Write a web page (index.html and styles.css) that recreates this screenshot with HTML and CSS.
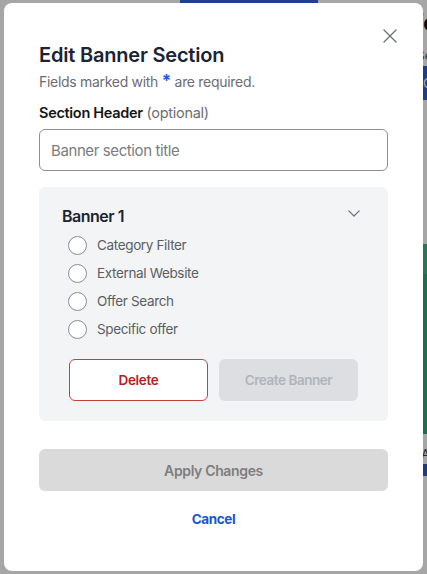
FILE: index.html
```html
<!DOCTYPE html>
<html lang="en">
<head>
<meta charset="utf-8">
<title>Edit Banner Section</title>
<link rel="stylesheet" href="styles.css">
</head>
<body>
<div class="page">
  <div class="page-topbar"></div>
  <div class="page-side">
    <div class="page-title">Offers</div>
    <div class="page-sub">Sections</div>
    <div class="page-btn">Create</div>
    <div class="page-green"><div class="page-green-top"></div></div>
    <div class="page-label">A</div>
    <div class="page-chip"></div>
  </div>
</div>
<div class="backdrop">
  <div class="modal" role="dialog" aria-labelledby="modal-title">
    <button class="close" aria-label="Close">
      <svg width="14" height="14" viewBox="0 0 14 14"><path d="M1 1L13 13M13 1L1 13" stroke="#6f7378" stroke-width="1.4" fill="none" stroke-linecap="round"/></svg>
    </button>
    <h1 class="title" id="modal-title">Edit Banner Section</h1>
    <p class="subtitle">Fields marked with <span class="req">*</span> are required.</p>
    <label class="field-label" for="hdr"><strong>Section Header</strong> <span class="opt">(optional)</span></label>
    <input class="text-input" id="hdr" type="text" placeholder="Banner section title">
    <div class="panel">
      <div class="panel-head">
        <span class="panel-title">Banner 1</span>
        <svg class="chev" width="12" height="7" viewBox="0 0 12 7"><path d="M0.8 0.8L6 6L11.2 0.8" stroke="#6f7378" stroke-width="1.2" fill="none" stroke-linecap="round" stroke-linejoin="round"/></svg>
      </div>
      <div class="options">
        <label class="option"><span class="radio"></span>Category Filter</label>
        <label class="option"><span class="radio"></span>External Website</label>
        <label class="option"><span class="radio"></span>Offer Search</label>
        <label class="option"><span class="radio"></span>Specific offer</label>
      </div>
      <div class="panel-actions">
        <button class="btn btn-delete">Delete</button>
        <button class="btn btn-create">Create Banner</button>
      </div>
    </div>
    <button class="btn btn-apply">Apply Changes</button>
    <button class="cancel">Cancel</button>
  </div>
</div>
</body>
</html>
```
FILE: styles.css
```css
* { box-sizing: border-box; }
html, body { margin: 0; padding: 0; }
body {
  width: 427px;
  height: 574px;
  overflow: hidden;
  font-family: Inter, "Noto Sans", "Liberation Sans", sans-serif;
  background: #ffffff;
  position: relative;
}

/* page behind the overlay */
.page {
  display: flex;
  flex-direction: column;
  height: 574px;
}
.page-topbar {
  margin-left: 180px;
  width: 138px;
  height: 4px;
  background: #2f64d8;
  flex: none;
}
.page-side {
  margin-left: 421px;
  display: flex;
  flex-direction: column;
  white-space: nowrap;
}
.page-title {
  font-size: 24px;
  font-weight: 700;
  color: #111827;
  line-height: 30px;
  margin-top: 4px;
  text-indent: -34px;
}
.page-sub {
  font-size: 12px;
  color: #4b5563;
  line-height: 16px;
  margin-top: 10px;
  text-indent: -4px;
}
.page-btn {
  margin-top: 2px;
  height: 34px;
  background: #2d5fd2;
  color: #fff;
  font-size: 13px;
  line-height: 34px;
  padding-left: 2px;
}
.page-green {
  margin-top: 144px;
  height: 190px;
  background: #1fb37c;
}
.page-green-top {
  height: 30px;
  background: #36bc88;
}
.page-label {
  margin-top: 12px;
  font-size: 13px;
  line-height: 16px;
  color: #374151;
}
.page-chip {
  margin-top: 2px;
  height: 12px;
  background: #3059c6;
}

/* overlay */
.backdrop {
  position: absolute;
  inset: 0;
  background: rgba(0, 0, 0, 0.35);
}
.modal {
  position: absolute;
  left: 4px;
  top: 3px;
  width: 419px;
  height: 568px;
  background: #ffffff;
  border-radius: 8px;
  padding: 38px 35px 0;
  display: flex;
  flex-direction: column;
}
.close {
  position: absolute;
  top: 26px;
  right: 26px;
  width: 14px;
  height: 14px;
  padding: 0;
  border: 0;
  background: none;
  display: flex;
}
.title {
  margin: 0;
  font-size: 20px;
  line-height: 28px;
  font-weight: 600;
  letter-spacing: -0.2px;
  color: #1b2433;
}
.subtitle {
  margin: 2px 0 0;
  font-size: 14px;
  line-height: 20px;
  letter-spacing: -0.3px;
  color: #6b6e73;
}
.req {
  color: #1f5bd6;
  font-weight: 700;
  font-size: 17px;
}
.field-label {
  margin-top: 10px;
  font-size: 14.5px;
  line-height: 22px;
  letter-spacing: -0.3px;
  color: #151515;
}
.field-label strong { font-weight: 600; }
.opt { color: #6b6e73; }
.text-input {
  margin-top: 5px;
  height: 42px;
  width: 100%;
  border: 1px solid #8d8f93;
  border-radius: 6px;
  padding: 0 11px;
  font-family: inherit;
  font-size: 15px;
  letter-spacing: -0.4px;
  color: #222;
  background: #fff;
}
.text-input::placeholder { color: #7a7c80; }

.panel {
  margin-top: 16px;
  background: #f3f4f6;
  border-radius: 6px;
  padding: 17px 28px 20px 23px;
  display: flex;
  flex-direction: column;
}
.panel-head {
  display: flex;
  align-items: center;
  justify-content: space-between;
}
.panel-title {
  font-size: 16px;
  line-height: 24px;
  font-weight: 600;
  letter-spacing: -0.5px;
  color: #1b2433;
}
.chev { margin-top: -6px; }
.options {
  margin-top: 3px;
  display: flex;
  flex-direction: column;
  padding-left: 6px;
}
.option {
  height: 28px;
  display: flex;
  align-items: center;
  gap: 10px;
  font-size: 13.5px;
  letter-spacing: -0.35px;
  color: #5b5e63;
}
.radio {
  width: 19px;
  height: 19px;
  border: 1.3px solid #8a8c90;
  border-radius: 50%;
  background: #fff;
  flex: none;
}
.panel-actions {
  margin-top: 16px;
  padding-left: 7px;
  margin-right: 2px;
  display: grid;
  grid-template-columns: 1fr 1fr;
  gap: 11px;
}
.btn {
  height: 42px;
  border-radius: 6px;
  font-family: inherit;
  font-size: 13.5px;
  font-weight: 600;
  padding: 0;
}
.btn-delete {
  background: #fff;
  border: 1px solid #c4423a;
  color: #b4211c;
  letter-spacing: -0.3px;
}
.btn-create {
  background: #dcdee2;
  border: 0;
  color: #b0b4ba;
  letter-spacing: -0.45px;
}
.btn-apply {
  margin-top: 28px;
  width: 100%;
  background: #dadada;
  border: 0;
  color: #7e7e7e;
  font-size: 14px;
  letter-spacing: -0.35px;
}
.cancel {
  margin-top: 18px;
  align-self: center;
  border: 0;
  background: none;
  padding: 0;
  font-family: inherit;
  font-size: 13.5px;
  line-height: 20px;
  font-weight: 700;
  letter-spacing: -0.4px;
  color: #1b55d2;
}
```
